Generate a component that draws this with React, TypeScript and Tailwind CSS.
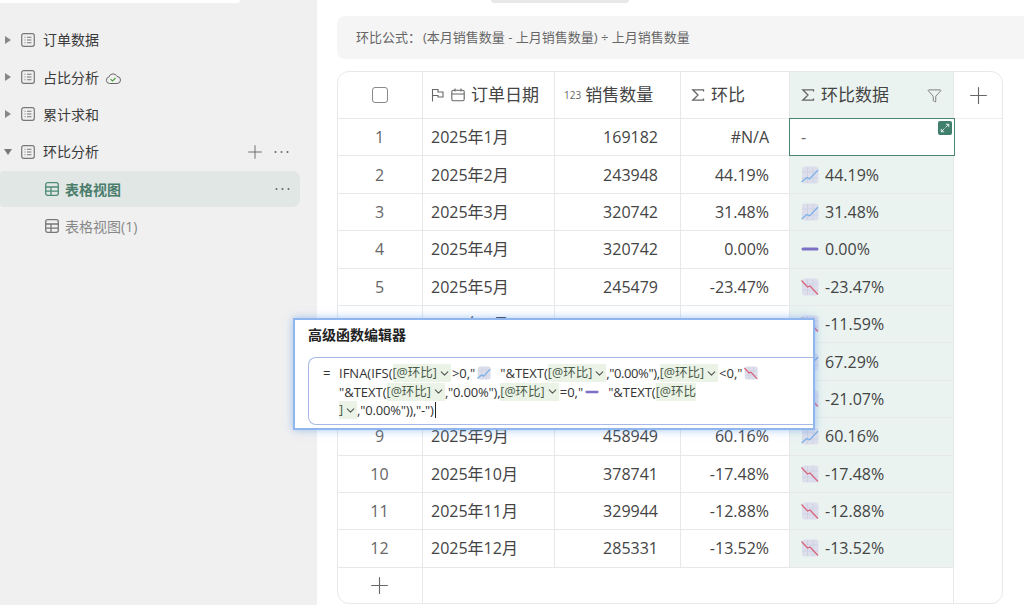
import { ChevronDown, Plus, Filter, Maximize2 } from "lucide-react";
import { ReactNode } from "react";

const FONT = "font-['Open_Sans','Noto_Sans_CJK_SC',sans-serif]";

function Spark({ kind, size = 18 }: { kind: "up" | "down" | "flat"; size?: number }) {
  if (kind === "flat") {
    return (
      <svg width={size} height={size} viewBox="0 0 18 18" className="shrink-0">
        <rect x="0.5" y="7.5" width="17" height="3" rx="1.5" fill="#7c6fc4" />
      </svg>
    );
  }
  const line = size < 18 ? 1.6 : 1.2;
  return (
    <svg width={size} height={size} viewBox="0 0 18 18" className="shrink-0">
      <rect x="1" y="0.5" width="16.5" height="17" rx="3" fill="#dcdfeb" />
      <path d="M6.5 1v16M12 1v16M1 6h16M1 12h16" stroke="#cbcfe0" strokeWidth="0.7" />
      {kind === "up" ? (
        <path d="M0.5 16l5.5-4.5 2.5 1.5L17 4" fill="none" stroke="#7bb0e8" strokeWidth={line} />
      ) : (
        <path d="M0.5 2.5l6 6.5 2.5-1 8 8.5" fill="none" stroke="#d9627c" strokeWidth={line} />
      )}
    </svg>
  );
}

function Dots() {
  return (
    <svg width="15" height="4" viewBox="0 0 15 4" fill="#666">
      <circle cx="1.5" cy="2" r="1" />
      <circle cx="7.5" cy="2" r="1" />
      <circle cx="13.5" cy="2" r="1" />
    </svg>
  );
}

function SigmaIcon() {
  return (
    <svg width="14" height="14" viewBox="0 0 14 14" fill="none" stroke="#666" strokeWidth="1.3" className="mr-[6px] shrink-0">
      <path d="M12.5 3.5V1.8H1.8L7 7l-5.2 5.2h10.7v-1.7" />
    </svg>
  );
}

function GridIcon({ color }: { color: string }) {
  return (
    <svg width="14" height="14" viewBox="0 0 14 14" fill="none" stroke={color} strokeWidth="1.3" className="mr-[6px] shrink-0">
      <rect x="0.7" y="0.7" width="12.6" height="12.6" rx="2" />
      <path d="M0.7 5h12.6M0.7 9.2h12.6M6 5v8.3" />
    </svg>
  );
}

function TreeRow({ label, open, extra, actions }: { label: string; open?: boolean; extra?: ReactNode; actions?: boolean }) {
  return (
    <div className="flex h-[37.4px] items-center pl-[4px] pr-[28px] text-[14px] text-[#3a3a3a]">
      <span className={open ? "w-0 h-0 border-x-[4px] border-x-transparent border-t-[6px] border-t-[#777]" : "w-0 h-0 ml-[1px] mr-[1px] border-y-[4px] border-y-transparent border-l-[6px] border-l-[#888]"} />
      <svg width="14" height="14" viewBox="0 0 14 14" fill="none" stroke="#777" className="ml-[9px] mr-[8px]">
        <rect x="0.7" y="0.7" width="12.6" height="12.6" rx="2" strokeWidth="1.2" />
        <path d="M3.5 4.2h1M6 4.2h4.5M3.5 7h1M6 7h4.5M3.5 9.8h1M6 9.8h4.5" strokeWidth="1.1" />
      </svg>
      <span>{label}</span>
      {extra}
      {actions && (
        <div className="ml-auto flex items-center gap-[8px] text-[#666]">
          <Plus size={22} strokeWidth={1} />
          <Dots />
        </div>
      )}
    </div>
  );
}

function Sidebar() {
  return (
    <aside className="w-[317px] shrink-0 bg-[#f0f0f0]">
      <div className="h-[3px] w-[240px] rounded-br-md bg-white" />
      <div className="mt-[18px]">
        <TreeRow label="订单数据" />
        <TreeRow
          label="占比分析"
          extra={
            <svg width="16" height="14" viewBox="0 0 16 14" fill="none" className="ml-[6px] mt-[2px]">
              <path d="M4.5 12.5a3.3 3.3 0 0 1-.6-6.5A4.3 4.3 0 0 1 12 5.5a3.5 3.5 0 0 1 0 7z" stroke="#666" strokeWidth="1" />
              <path d="M5.5 8.2l2 1.8 3-3" stroke="#4a9c3a" strokeWidth="1.1" />
            </svg>
          }
        />
        <TreeRow label="累计求和" />
        <TreeRow label="环比分析" open actions />
        <div className="mr-[17px] flex h-[36px] items-center rounded-r-lg rounded-l-sm bg-[#e0e7e5] pl-[45px] pr-[10px] pt-px text-[14px] font-bold text-[#4b7d6c]">
          <GridIcon color="#4f8a75" />
          <span>表格视图</span>
          <span className="ml-auto"><Dots /></span>
        </div>
        <div className="flex h-[38px] items-center pl-[45px] pt-px text-[14px] text-[#888]">
          <GridIcon color="#777" />
          <span>表格视图(1)</span>
        </div>
      </div>
    </aside>
  );
}

const rows = [
  ["1", "2025年1月", "169182", "#N/A", ""],
  ["2", "2025年2月", "243948", "44.19%", "up"],
  ["3", "2025年3月", "320742", "31.48%", "up"],
  ["4", "2025年4月", "320742", "0.00%", "flat"],
  ["5", "2025年5月", "245479", "-23.47%", "down"],
  ["6", "2025年6月", "217017", "-11.59%", "down"],
  ["7", "2025年7月", "363049", "67.29%", "up"],
  ["8", "2025年8月", "286556", "-21.07%", "down"],
  ["9", "2025年9月", "458949", "60.16%", "up"],
  ["10", "2025年10月", "378741", "-17.48%", "down"],
  ["11", "2025年11月", "329944", "-12.88%", "down"],
  ["12", "2025年12月", "285331", "-13.52%", "down"],
];

const cell = "flex items-center border-b border-r border-[#e6e8ea] text-[16px] text-[#444]";

function SheetTable() {
  return (
    <div className="mt-[12px] mr-[21px] grid h-[533px] grid-cols-[85px_132px_126px_109px_164px_1fr] grid-rows-[47px_repeat(12,37.4px)_1fr] overflow-hidden rounded-xl border border-[#e6e8ea]">
      <div className={`${cell} justify-center pr-px`}>
        <div className="h-[16px] w-[16px] rounded-[3px] border-[1.5px] border-[#8a8a8a]" />
      </div>
      <div className={`${cell} pl-[8px] !text-[17px]`}>
        <svg width="14" height="14" viewBox="0 0 14 14" fill="none" stroke="#666" strokeWidth="1.1" className="mr-[6px] shrink-0">
          <path d="M1.5 13.5V1.5h5.5v2.5h5v5H7V7.5H1.5" />
        </svg>
        <svg width="14" height="14" viewBox="0 0 14 14" fill="none" stroke="#666" strokeWidth="1.1" className="mr-[6px] shrink-0">
          <rect x="0.8" y="2.2" width="12.4" height="10.6" rx="1.5" />
          <path d="M0.8 6h12.4M4 0.5v3M10 0.5v3" />
        </svg>
        订单日期
      </div>
      <div className={`${cell} pl-[9px] !text-[17px]`}>
        <span className="mr-[4px] text-[10px] text-[#666]">123</span>
        销售数量
      </div>
      <div className={`${cell} pl-[10px] !text-[17px]`}>
        <SigmaIcon />
        环比
      </div>
      <div className={`${cell} border-[#d9e5e1] bg-[#eaf3f0] pl-[11px] pr-[11px] !text-[17px]`}>
        <SigmaIcon />
        环比数据
        <Filter size={15} strokeWidth={1.3} className="ml-auto text-[#666]" />
      </div>
      <div className="flex items-center justify-center border-b border-[#eeeeee] text-[#666]">
        <Plus size={27} strokeWidth={1} />
      </div>

      {rows.map(([n, date, qty, pct, kind]) => (
        <div key={n} className="contents">
          <div className={`${cell} justify-center pr-px text-[#666]`}>{n}</div>
          <div className={`${cell} pl-[8px]`}>{date}</div>
          <div className={`${cell} justify-end pr-[22px]`}>{qty}</div>
          <div className={`${cell} justify-end pr-[20px]`}>{pct}</div>
          {kind === "" ? (
            <div className="relative z-10 -mx-px -mt-px flex items-center border-[1.5px] border-[#4d8573] bg-white pl-[11px] text-[16px] text-[#666]">
              -
              <span className="absolute right-[2px] top-[2px] flex h-[14px] w-[14px] items-center justify-center rounded-[2px] bg-[#3f7f6b] text-white">
                <Maximize2 size={10} strokeWidth={2} />
              </span>
            </div>
          ) : (
            <div className={`${cell} gap-[6px] border-[#d9e5e1] bg-[#eaf3f0] pl-[11px]`}>
              <Spark kind={kind as "up" | "down" | "flat"} />
              {pct}
            </div>
          )}
          <div />
        </div>
      ))}

      <div className="flex items-center justify-center border-r border-[#e6e8ea] pr-px text-[#666]">
        <Plus size={27} strokeWidth={1} />
      </div>
      <div className="col-span-4 border-r border-[#e6e8ea]" />
      <div />
    </div>
  );
}

function Chip({ children, caret = true }: { children: ReactNode; caret?: boolean }) {
  return (
    <span className="inline-flex h-[18px] items-center bg-[#eaf3e6] text-[12.5px] text-[#4a5a4a]">
      {children}
      {caret && <ChevronDown size={13} strokeWidth={2} className="ml-px text-[#555]" />}
    </span>
  );
}

function FormulaEditor() {
  return (
    <div className="absolute left-[293px] top-[318px] h-[112px] w-[522px] border-2 border-[#8fb6ef] bg-white shadow-[0_0_8px_rgba(90,150,235,0.55)]">
      <div className="flex h-[37px] items-center pb-[8px] pl-[13px] text-[14px] font-bold text-[#222]">高级函数编辑器</div>
      <div className="ml-[13px] flex h-[68px] rounded-l-lg border border-r-0 border-[#a9b9e6] pl-[14px] pt-[6px] text-[13px] leading-[18.5px] text-[#333]">
        <span className="w-[16px] shrink-0">=</span>
        <div className="whitespace-nowrap">
          <div className="flex items-center">
            IFNA(IFS(<Chip>[@环比]</Chip><span className="ml-px">&gt;0,"</span>
            <span className="ml-[2px]"><Spark kind="up" size={14} /></span>
            <span className="ml-[9px]">"&amp;TEXT(</span><Chip>[@环比]</Chip>
            <span className="tracking-[-0.4px]">,"0.00%"),</span><Chip>[@环比]</Chip>
            <span className="ml-px">&lt;0,"</span>
            <span className="ml-[2px]"><Spark kind="down" size={14} /></span>
          </div>
          <div className="flex items-center">
            "&amp;TEXT(<Chip>[@环比]</Chip>
            <span className="tracking-[-0.2px]">,"0.00%"),</span><Chip>[@环比]</Chip>
            <span className="ml-px">=0,"</span>
            <span className="ml-[2px]"><Spark kind="flat" size={14} /></span>
            <span className="ml-[9px]">"&amp;TEXT(</span><Chip caret={false}>[@环比</Chip>
          </div>
          <div className="flex items-center">
            <Chip>]</Chip><span className="tracking-[-0.2px]">,"0.00%")),"-")</span>
            <span className="ml-px h-[16px] w-px bg-[#222]" />
          </div>
        </div>
      </div>
    </div>
  );
}

export default function App() {
  return (
    <div className={`relative flex h-[605px] w-[1024px] overflow-hidden bg-white ${FONT}`}>
      <Sidebar />
      <main className="min-w-0 flex-1 pl-[20px]">
        <div className="ml-[154px] h-[3px] w-[138px] rounded-b-md bg-[#e8e8e8]" />
        <div className="mt-[13px] flex h-[43px] items-center rounded-l-lg bg-[#f5f5f5] pl-[19px] text-[13px] text-[#666]">
          <span className="mr-[2px]">环比公式：</span>
          (本月销售数量 - 上月销售数量) ÷ 上月销售数量
        </div>
        <SheetTable />
      </main>
      <FormulaEditor />
    </div>
  );
}
